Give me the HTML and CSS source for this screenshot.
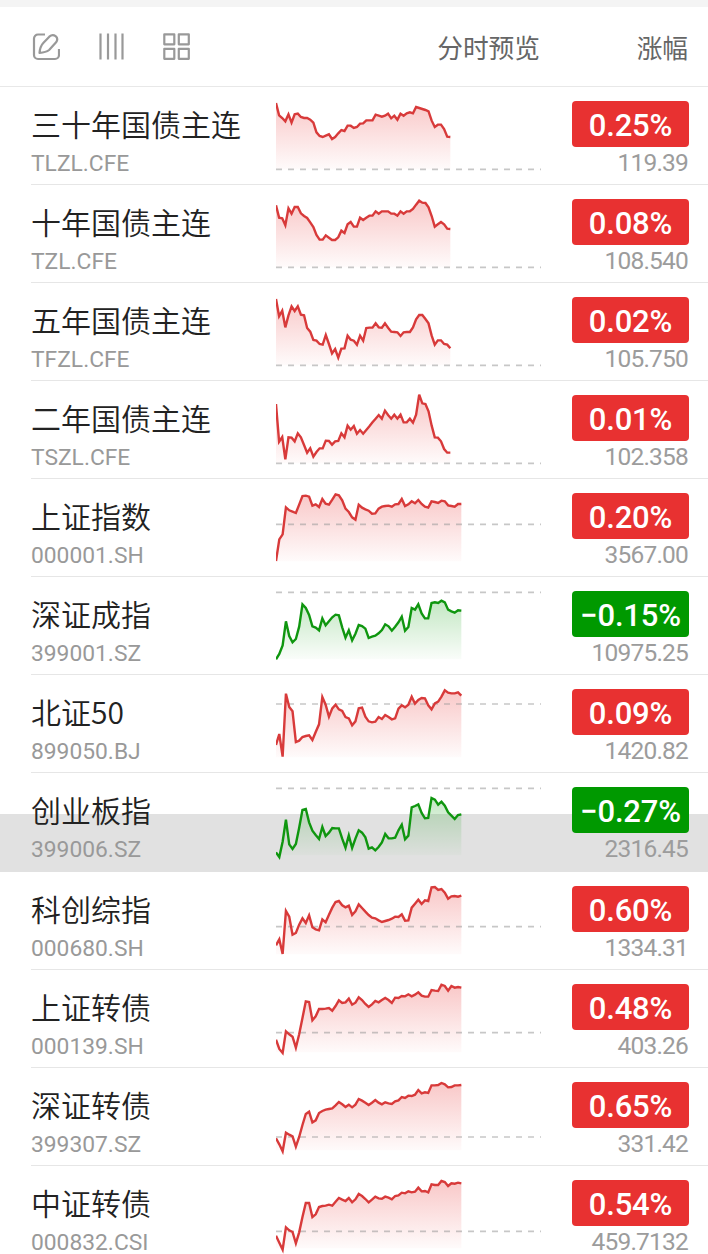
FILE: index.html
```html
<!DOCTYPE html>
<html lang="zh-CN">
<head>
    <meta charset="UTF-8">
    <meta name="viewport" content="width=device-width, initial-scale=1.0">
    <title>自选行情</title>
    <link rel="stylesheet" href="styles.css">
</head>
<body>
    <header class="toolbar">
        <div class="tools">
            <svg class="icon" viewBox="0 0 28 28">
                <path d="M13 1.500H6a4 4 0 0 0-4 4V22a4 4 0 0 0 4 4h17a4 4 0 0 0 4-4v-6" />
                <path d="M7.500 20c.3-4 1.500-7.700 4-10.300l5.800-6c4.300-3.700 10.200.6 6.800 5.600l-7 7.700C14.500 19 11.300 19.600 7.500 20z" />
            </svg>
            <svg class="icon" viewBox="0 0 28 28">
                <path d="M3.500 .5v26M11 .5v26M18.500 .5v26M25.500 .5v26" />
            </svg>
            <svg class="icon" viewBox="0 0 28 28">
                <path d="M2.300 1.300h10v10h-10zM16.800 1.300h10v10h-10zM2.300 15.800h10v10h-10zM16.800 15.800h10v10h-10z" />
            </svg>
        </div>
        <span class="col-preview">分时预览</span>
        <span class="col-change">涨幅</span>
    </header>

    <main id="list"></main>

    <script src="script.js"></script>
</body>
</html>
```
FILE: styles.css
```css
* {
    margin: 0;
    padding: 0;
    box-sizing: border-box;
}

body {
    font-family: Roboto, "Noto Sans CJK SC", sans-serif;
    background-color: #ffffff;
    height: 1254px;
    overflow: hidden;
}

/* Header */
.toolbar {
    display: flex;
    align-items: center;
    height: 87px;
    padding: 0 20px 0 32px;
    border-top: 7px solid #f4f4f4;
    border-bottom: 1px solid #e8e8e8;
    font-size: 25.7px;
    color: #666666;
}

.tools {
    display: flex;
    gap: 37px;
    flex: 1;
}

.icon {
    width: 28px;
    height: 28px;
    fill: none;
    stroke: #999999;
    stroke-width: 2.2;
    stroke-linejoin: round;
}

.col-change {
    width: 148px;
    text-align: right;
}

/* Quote rows */
.row {
    height: 98px;
    padding-left: 31px;
}

.row.pressed {
    height: 99px;
    background: linear-gradient(transparent 41px, #e1e1e1 41px);
}

.row-inner {
    display: flex;
    height: 100%;
    padding-right: 19px;
    border-bottom: 1px solid #e6e6e6;
}

.pressed .row-inner {
    border-bottom-color: #e1e1e1;
}

.info {
    width: 245px;
    padding-top: 14px;
}

.name {
    font-family: "Noto Sans CJK SC", sans-serif;
    font-size: 30px;
    font-weight: 350;
    line-height: 44px;
    color: #222222;
}

.code {
    margin-top: 8px;
    font-size: 22.8px;
    line-height: 22px;
    color: #999999;
}

.chart {
    width: 265px;
    height: 98px;
    margin-top: 1px;
    overflow: hidden;
}

.line {
    fill: none;
    stroke-width: 7.2;
}

.up .line {
    stroke: #d83a3a;
}

.down .line {
    stroke: #0f960f;
}

.base {
    stroke: #999999;
    stroke-opacity: 0.55;
    stroke-width: 5;
    stroke-dasharray: 18;
}

.quote {
    flex: 1;
    display: flex;
    flex-direction: column;
    align-items: flex-end;
    padding-top: 13.5px;
}

.badge {
    width: 117px;
    height: 46px;
    border-radius: 4px;
    font-size: 31px;
    font-weight: 500;
    letter-spacing: -0.2px;
    line-height: 50px;
    text-align: center;
    color: #ffffff;
}

.up .badge {
    background-color: #e83131;
}

.down .badge {
    background-color: #009900;
}

.price {
    margin: 4px 1px 0 0;
    font-size: 24.5px;
    letter-spacing: -0.8px;
    line-height: 24px;
    color: #9c9c9c;
}

.defs {
    position: absolute;
    width: 0;
    height: 0;
}
```
FILE: script.js
```js
// line: intraday values measured from the top of the chart, base: previous close
// span: how far the session has progressed (chart is 795 units wide)
const quotes = [
    { name: "三十年国债主连", code: "TLZL.CFE", change: "0.25%", price: "119.39", span: 523, base: 244,
      line: [45,82,90,100,79,104,79,77,87,90,90,95,104,133,144,147,143,139,153,147,136,126,129,113,113,120,117,107,106,97,97,97,80,83,86,83,77,91,83,95,77,83,76,73,76,57,60,63,66,70,98,117,110,110,123,146,147] },
    { name: "十年国债主连", code: "TZL.CFE", change: "0.08%", price: "108.540", span: 523, base: 244,
      line: [58,95,97,118,67,83,63,63,82,90,96,109,123,147,161,161,148,155,162,162,154,134,141,115,108,122,122,95,102,95,89,89,76,83,76,76,76,83,83,89,76,83,76,76,69,56,44,50,51,64,90,122,115,108,115,128,129] },
    { name: "五年国债主连", code: "TFZL.CFE", change: "0.02%", price: "105.750", span: 523, base: 244,
      line: [45,97,80,130,94,67,81,67,92,94,132,143,168,170,180,182,153,180,208,195,221,194,193,155,167,170,182,155,170,132,131,131,118,130,131,118,131,143,144,145,156,145,144,144,130,106,93,93,105,118,155,182,169,169,180,182,193] },
    { name: "二年国债主连", code: "TSZL.CFE", change: "0.01%", price: "102.358", span: 523, base: 244,
      line: [66,179,165,232,166,167,178,154,166,189,212,199,224,210,199,199,176,177,188,178,177,154,166,131,143,132,155,144,155,144,133,121,110,99,110,86,99,110,98,110,98,121,121,110,122,98,38,64,66,88,131,166,167,178,201,212,212] },
    { name: "上证指数", code: "000001.SH", change: "0.20%", price: "3567.00", span: 556, base: 133,
      line: [243,178,163,82,91,95,99,74,48,47,50,77,73,81,57,71,74,59,43,46,61,86,96,112,119,74,83,88,92,101,100,86,80,78,77,80,73,72,57,78,73,64,70,60,72,80,83,64,66,69,62,64,76,78,80,72,72] },
    { name: "深证成指", code: "399001.SZ", change: "−0.15%", price: "10975.25", span: 556, base: 43,
      line: [244,228,202,130,174,193,183,146,79,90,111,145,149,157,121,142,130,118,110,112,148,179,157,187,167,141,144,152,180,176,173,166,156,139,145,158,146,133,116,158,147,90,95,79,106,121,121,75,73,75,68,73,95,100,104,97,98] },
    { name: "北证50", code: "899050.BJ", change: "0.09%", price: "1420.82", span: 556, base: 84,
      line: [207,174,242,53,93,106,198,194,183,180,178,192,168,145,63,86,122,97,86,100,105,123,127,148,136,97,95,122,136,139,137,123,129,117,123,130,127,98,88,94,86,62,83,72,66,67,88,100,82,77,62,43,50,52,52,49,59] },
    { name: "创业板指", code: "399006.SZ", change: "−0.27%", price: "2316.45", span: 556, base: 43, pressed: true,
      line: [235,249,203,137,211,225,210,161,108,105,145,170,183,195,159,186,176,162,163,163,194,221,184,222,194,169,176,190,224,220,229,219,205,180,193,193,191,169,152,196,185,100,96,91,117,133,132,72,77,92,83,95,115,125,135,123,121] },
    { name: "科创综指", code: "000680.SH", change: "0.60%", price: "1334.31", span: 556, base: 161,
      line: [217,199,243,114,131,185,180,155,136,150,127,163,169,172,139,148,125,104,87,84,97,103,98,126,115,94,105,116,126,134,136,142,147,144,141,137,131,132,124,143,142,104,92,80,93,82,84,43,42,51,48,59,77,70,69,71,68] },
    { name: "上证转债", code: "000139.SH", change: "0.48%", price: "403.26", span: 556, base: 185,
      line: [206,234,246,181,190,197,230,190,141,91,93,148,136,114,114,113,111,119,105,88,96,94,83,101,95,79,87,99,108,100,90,94,87,81,87,96,80,81,75,76,70,76,71,64,74,77,77,57,59,60,41,45,59,45,50,48,50] },
    { name: "深证转债", code: "399307.SZ", change: "0.65%", price: "331.42", span: 556, base: 204,
      line: [208,226,247,191,197,202,233,204,168,135,128,160,154,132,126,122,120,118,109,99,106,114,107,115,107,90,95,101,108,101,93,101,106,100,103,105,97,94,84,87,80,81,77,63,73,70,72,49,49,48,42,46,55,54,49,49,48] },
    { name: "中证转债", code: "000832.CSI", change: "0.54%", price: "459.7132", span: 556, base: 193,
      line: [206,227,248,181,190,195,229,196,150,108,108,150,142,120,117,116,113,116,104,93,98,102,93,106,97,81,87,96,106,98,89,94,95,89,92,97,87,85,77,79,73,76,74,62,73,72,76,52,54,54,42,45,57,49,50,47,49] }
];

const gradients = `
    <svg class="defs">
        <linearGradient id="fill-up" gradientUnits="userSpaceOnUse" x1="0" y1="40" x2="0" y2="244">
            <stop offset="0" stop-color="#e83131" stop-opacity="0.27" />
            <stop offset="1" stop-color="#e83131" stop-opacity="0.02" />
        </linearGradient>
        <linearGradient id="fill-down" gradientUnits="userSpaceOnUse" x1="0" y1="40" x2="0" y2="244">
            <stop offset="0" stop-color="#009900" stop-opacity="0.27" />
            <stop offset="1" stop-color="#009900" stop-opacity="0.02" />
        </linearGradient>
    </svg>`;

function renderRow(q) {
    const dir = q.change.startsWith("−") ? "down" : "up";
    const step = q.span / (q.line.length - 1);
    const points = q.line.map((y, i) => `${(i * step).toFixed(1)},${y}`).join(" ");

    return `
        <div class="row ${dir}${q.pressed ? " pressed" : ""}">
            <div class="row-inner">
                <div class="info">
                    <div class="name">${q.name}</div>
                    <div class="code">${q.code}</div>
                </div>
                <svg class="chart" viewBox="0 0 795 294">
                    <polygon points="0,244 ${points} ${q.span},244" fill="url(#fill-${dir})" />
                    <line class="base" x1="0" y1="${q.base}" x2="795" y2="${q.base}" />
                    <polyline class="line" points="${points}" />
                </svg>
                <div class="quote">
                    <div class="badge">${q.change}</div>
                    <div class="price">${q.price}</div>
                </div>
            </div>
        </div>`;
}

document.getElementById("list").innerHTML = gradients + quotes.map(renderRow).join("");
```
